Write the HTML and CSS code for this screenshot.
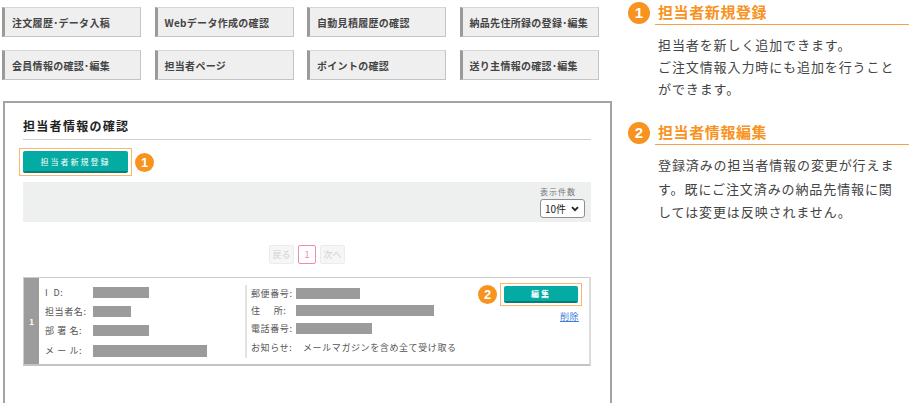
FILE: index.html
```
<!DOCTYPE html>
<html lang="ja">

<head>
    <meta charset="UTF-8">
    <meta name="viewport" content="width=device-width, initial-scale=1.0">
    <title>担当者情報の確認</title>
    <link rel="stylesheet" href="styles.css">
</head>

<body>
    <div class="main">
        <nav class="menu">
            <a class="menu_btn">注文履歴･データ入稿</a>
            <a class="menu_btn">Webデータ作成の確認</a>
            <a class="menu_btn">自動見積履歴の確認</a>
            <a class="menu_btn">納品先住所録の登録･編集</a>
            <a class="menu_btn">会員情報の確認･編集</a>
            <a class="menu_btn">担当者ページ</a>
            <a class="menu_btn">ポイントの確認</a>
            <a class="menu_btn">送り主情報の確認･編集</a>
        </nav>

        <div class="panel">
            <h2 class="panel_title">担当者情報の確認</h2>

            <div class="new_row">
                <div class="hl_box">
                    <button class="btn_teal btn_new">担当者新規登録</button>
                </div>
                <span class="num num_s">1</span>
            </div>

            <div class="filter">
                <div class="count">
                    <div class="count_label">表示件数</div>
                    <div class="count_select">
                        <span>10件</span>
                        <svg width="8" height="6" viewBox="0 0 8 6"><path d="M1 1.2 L4 4.2 L7 1.2" fill="none" stroke="#222" stroke-width="1.8"/></svg>
                    </div>
                </div>
            </div>

            <div class="pager">
                <span class="pg pg_off">戻る</span>
                <span class="pg pg_on">1</span>
                <span class="pg pg_off">次へ</span>
            </div>

            <div class="card">
                <div class="card_no">1</div>
                <div class="card_body">
                    <div class="col col_left">
                        <div class="row"><span class="lbl">I&nbsp;&nbsp;D:</span><span class="bar" style="width:56px"></span></div>
                        <div class="row"><span class="lbl">担当者名:</span><span class="bar" style="width:38px"></span></div>
                        <div class="row"><span class="lbl">部 署 名:</span><span class="bar" style="width:56px"></span></div>
                        <div class="row row_last"><span class="lbl">メ ー ル:</span><span class="bar bar_tall" style="width:114px"></span></div>
                    </div>
                    <div class="col col_right">
                        <div class="row"><span class="lbl">郵便番号:</span><span class="bar" style="width:64px"></span></div>
                        <div class="row"><span class="lbl">住&nbsp;&nbsp;&nbsp;&nbsp;&nbsp;所:</span><span class="bar" style="width:138px"></span></div>
                        <div class="row"><span class="lbl">電話番号:</span><span class="bar" style="width:76px"></span></div>
                        <div class="row row_last"><span class="lbl lbl_wide">お知らせ:</span><span class="val">メールマガジンを含め全て受け取る</span></div>
                    </div>
                    <div class="actions">
                        <div class="edit_row">
                            <span class="num num_s">2</span>
                            <div class="hl_box">
                                <button class="btn_teal btn_edit">編集</button>
                            </div>
                        </div>
                        <a class="del">削除</a>
                    </div>
                </div>
            </div>
        </div>
    </div>

    <aside class="side">
        <div class="side_head">
            <span class="num num_l">1</span>
            <h3 class="side_title">担当者新規登録</h3>
        </div>
        <p class="side_text">担当者を新しく追加できます。<br>ご注文情報入力時にも追加を行うこと<br>ができます。</p>

        <div class="side_head head2">
            <span class="num num_l">2</span>
            <h3 class="side_title">担当者情報編集</h3>
        </div>
        <p class="side_text text2">登録済みの担当者情報の変更が行えま<br>す。既にご注文済みの納品先情報に関<br>しては変更は反映されません。</p>
    </aside>
</body>

</html>
```

FILE: styles.css
```
* {
    box-sizing: border-box;
}

body {
    margin: 0;
    display: flex;
    height: 403px;
    overflow: hidden;
    background: #fff;
    color: #333;
    font-family: 'Noto Sans CJK JP', 'Noto Sans', sans-serif;
}

/* left side */
.main {
    width: 612px;
    padding-left: 2px;
    flex-shrink: 0;
}

.menu {
    display: grid;
    grid-template-columns: repeat(4, 139px);
    grid-auto-rows: 30px;
    column-gap: 13.5px;
    row-gap: 13px;
    padding-top: 7px;
}

.menu_btn {
    display: flex;
    align-items: center;
    padding-left: 7px;
    background: #efefef;
    border: 1px solid #d6d6d6;
    border-bottom-color: #c4c4c4;
    border-right-color: #c4c4c4;
    border-left: 3px solid #9a9a9a;
    font-size: 10px;
    font-weight: bold;
    letter-spacing: 0.3px;
    color: #444;
    white-space: nowrap;
}

.panel {
    margin: 21px 0 0 1px;
    height: 320px;
    border: 2px solid #a3a3a3;
    border-bottom: 0;
    padding: 15px 19px 0 18px;
}

.panel_title {
    margin: 0;
    padding-bottom: 5px;
    border-bottom: 1px solid #cfcfcf;
    font-size: 12px;
    line-height: 16px;
    letter-spacing: 1.3px;
    color: #222;
}

.new_row {
    display: flex;
    align-items: center;
    margin: 8px 0 0 -4px;
}

.hl_box {
    border: 1px solid #f9b66c;
    padding: 2px 3px;
}

.btn_teal {
    display: block;
    border: 0;
    border-bottom: 2px solid #0a7d76;
    border-radius: 2px;
    background: #04aba2;
    color: #fff;
    font-family: inherit;
    font-size: 8px;
    letter-spacing: 2px;
    padding: 0;
}

.btn_new {
    width: 105px;
    height: 22px;
}

.btn_edit {
    width: 74px;
    height: 17px;
    font-weight: bold;
}

.num {
    display: flex;
    align-items: center;
    justify-content: center;
    border-radius: 50%;
    background: #f7931e;
    color: #fff;
    font-family: 'Liberation Sans', Arial, sans-serif;
    font-weight: bold;
    flex-shrink: 0;
}

.num_s {
    width: 19px;
    height: 19px;
    font-size: 13px;
    margin-left: 3px;
}

.filter {
    margin-top: 6px;
    height: 40px;
    background: #eeefef;
    display: flex;
    justify-content: flex-end;
    padding: 5px 6px 0 0;
}

.count_label {
    font-size: 8px;
    line-height: 10px;
    color: #777;
    letter-spacing: 1px;
}

.count_select {
    margin-top: 2px;
    width: 45px;
    height: 19px;
    background: #fff;
    border: 1px solid #8f8f8f;
    border-radius: 3px;
    display: flex;
    align-items: center;
    justify-content: space-between;
    padding: 0 5px 0 4px;
    font-size: 10px;
    color: #222;
}

.pager {
    margin-top: 23px;
    display: flex;
    justify-content: center;
    gap: 4px;
}

.pg {
    height: 19px;
    display: flex;
    align-items: center;
    justify-content: center;
    font-size: 9px;
    border-radius: 2px;
}

.pg_off {
    width: 25px;
    background: #f6f6f6;
    border: 1px solid #ececec;
    color: #d2d2d2;
}

.pg_on {
    width: 18px;
    border: 1px solid #ee8bb2;
    color: #ee8bb2;
}

.card {
    margin-top: 13px;
    height: 89px;
    display: flex;
    border: 1px solid #cdcdcd;
    border-right: 2px solid #dcdcdc;
    border-bottom: 2px solid #c4c4c4;
}

.card_no {
    width: 15px;
    background: #9c9c9c;
    color: #fff;
    font-size: 8px;
    font-weight: bold;
    display: flex;
    align-items: center;
    justify-content: center;
}

.card_body {
    flex: 1;
    display: flex;
    padding: 5px 7px 0 6px;
}

.col {
    display: flex;
    flex-direction: column;
}

.col_left {
    width: 200px;
}

.col_right {
    border-left: 2px solid #e3e3e3;
    padding-left: 4px;
    height: 73px;
    margin-top: 2px;
}

.col_right .row:first-child {
    height: 17px;
}

.row {
    height: 19px;
    display: flex;
    align-items: center;
    font-size: 9px;
    letter-spacing: 0.6px;
    color: #555;
    white-space: nowrap;
}

.row_last {
    height: 21px;
}

.lbl {
    width: 48px;
}

.col_right .lbl {
    width: 45px;
}

.col_right .lbl_wide {
    width: 52px;
}

.bar {
    height: 11px;
    background: #9b9b9b;
}

.bar_tall {
    height: 12px;
}

.actions {
    margin-left: auto;
    display: flex;
    flex-direction: column;
    align-items: flex-end;
}

.edit_row {
    display: flex;
    align-items: center;
}

.edit_row .num_s {
    margin: 0 3px 0 0;
}

.del {
    margin: 4px 3px 0 0;
    font-size: 9px;
    color: #3b82d6;
    text-decoration: underline;
    letter-spacing: 0.5px;
}

/* right side */
.side {
    margin-left: 14px;
    flex: 1;
    min-width: 0;
}

.side_head {
    display: flex;
    align-items: center;
    height: 25px;
    padding-left: 2px;
}

.num_l {
    width: 22px;
    height: 22px;
    font-size: 15px;
}

.side_title {
    flex: 1;
    margin: 0 0 0 5px;
    padding: 0 0 2px 3px;
    border-bottom: 1px solid #f7a24a;
    font-size: 15px;
    line-height: 20px;
    letter-spacing: 0.6px;
    color: #f7931e;
    align-self: flex-end;
}

.side_text {
    margin: 9px 0 0 32px;
    font-size: 13px;
    line-height: 22px;
    letter-spacing: 0.9px;
    color: #444;
    white-space: nowrap;
}

.head2 {
    margin-top: 20px;
}

.text2 {
    margin-top: 8px;
    line-height: 23.5px;
}
```
